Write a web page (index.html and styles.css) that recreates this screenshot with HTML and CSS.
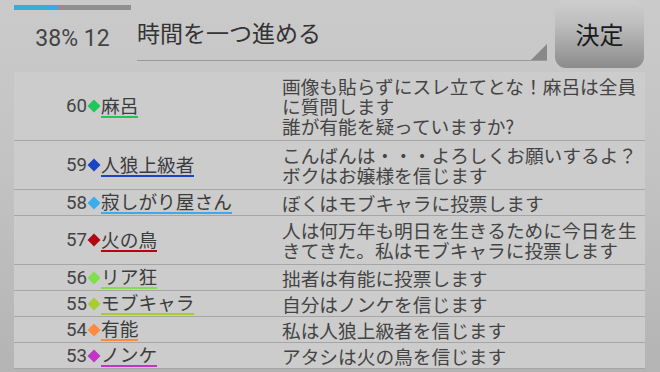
FILE: index.html
```html
<!DOCTYPE html>
<html lang="ja">
<head>
<meta charset="utf-8">
<link rel="stylesheet" href="styles.css">
</head>
<body>
<div class="screen">
  <header class="top">
    <div class="status">
      <div class="progress"><div class="progress-fill" style="width:38%"></div></div>
      <div class="stats">38% 12</div>
    </div>
    <div class="field">
      <span class="field-text">時間を一つ進める</span>
      <svg class="corner" width="16" height="16" viewBox="0 0 16 16"><polygon points="0,16 16,16 16,0" fill="#888"/></svg>
    </div>
    <button class="decide">決定</button>
  </header>
  <div class="list">
    <div class="row" style="--c:#1fc856">
      <div class="who"><span class="no">60</span><svg class="dia" viewBox="0 0 14 14"><polygon points="7,0.5 13.5,7 7,13.5 0.5,7"/></svg><span class="name">麻呂</span></div>
      <div class="msg multi">画像も貼らずにスレ立てとな！麻呂は全員に質問します<br>誰が有能を疑っていますか?</div>
    </div>
    <div class="row" style="--c:#1a44c2">
      <div class="who"><span class="no">59</span><svg class="dia" viewBox="0 0 14 14"><polygon points="7,0.5 13.5,7 7,13.5 0.5,7"/></svg><span class="name">人狼上級者</span></div>
      <div class="msg multi">こんばんは・・・よろしくお願いするよ？<br>ボクはお嬢様を信じます</div>
    </div>
    <div class="row" style="--c:#38acec">
      <div class="who"><span class="no">58</span><svg class="dia" viewBox="0 0 14 14"><polygon points="7,0.5 13.5,7 7,13.5 0.5,7"/></svg><span class="name">寂しがり屋さん</span></div>
      <div class="msg">ぼくはモブキャラに投票します</div>
    </div>
    <div class="row" style="--c:#b00712">
      <div class="who"><span class="no">57</span><svg class="dia" viewBox="0 0 14 14"><polygon points="7,0.5 13.5,7 7,13.5 0.5,7"/></svg><span class="name">火の鳥</span></div>
      <div class="msg multi">人は何万年も明日を生きるために今日を生きてきた。私はモブキャラに投票します</div>
    </div>
    <div class="row" style="--c:#7fe04a">
      <div class="who"><span class="no">56</span><svg class="dia" viewBox="0 0 14 14"><polygon points="7,0.5 13.5,7 7,13.5 0.5,7"/></svg><span class="name">リア狂</span></div>
      <div class="msg">拙者は有能に投票します</div>
    </div>
    <div class="row" style="--c:#a9cc30">
      <div class="who"><span class="no">55</span><svg class="dia" viewBox="0 0 14 14"><polygon points="7,0.5 13.5,7 7,13.5 0.5,7"/></svg><span class="name">モブキャラ</span></div>
      <div class="msg">自分はノンケを信じます</div>
    </div>
    <div class="row" style="--c:#ff8a3e">
      <div class="who"><span class="no">54</span><svg class="dia" viewBox="0 0 14 14"><polygon points="7,0.5 13.5,7 7,13.5 0.5,7"/></svg><span class="name">有能</span></div>
      <div class="msg">私は人狼上級者を信じます</div>
    </div>
    <div class="row" style="--c:#c234c8">
      <div class="who"><span class="no">53</span><svg class="dia" viewBox="0 0 14 14"><polygon points="7,0.5 13.5,7 7,13.5 0.5,7"/></svg><span class="name">ノンケ</span></div>
      <div class="msg">アタシは火の鳥を信じます</div>
    </div>
  </div>
</div>
</body>
</html>
```

FILE: styles.css
```css
html, body {
  margin: 0;
  padding: 0;
  width: 660px;
  height: 372px;
  overflow: hidden;
}
body {
  background: linear-gradient(#cacaca 0%, #c4c4c4 40%, #b4b4b4 100%);
  font-family: "Noto Sans CJK JP", "Noto Sans", sans-serif;
  color: #444;
}
.screen {
  display: flex;
  flex-direction: column;
}
.top {
  display: flex;
  height: 72px;
  padding-left: 14px;
  box-sizing: border-box;
}
.status {
  width: 117px;
  display: flex;
  flex-direction: column;
  align-items: center;
}
.progress {
  margin-top: 5px;
  width: 117px;
  height: 5px;
  background: #8f8f8f;
}
.progress-fill {
  height: 100%;
  background: #36abe2;
}
.stats {
  margin-top: 15px;
  font-family: Roboto, "Liberation Sans", sans-serif;
  font-size: 23px;
  line-height: 27px;
  color: #444;
}
.field {
  margin-left: 6px;
  width: 410px;
  height: 61px;
  box-sizing: border-box;
  border-bottom: 1px solid #9a9a9a;
  display: flex;
  align-items: flex-start;
  justify-content: space-between;
}
.field-text {
  margin-top: 16px;
  font-size: 23px;
  line-height: 32px;
  color: #333;
}
.corner {
  align-self: flex-end;
  display: block;
}
.decide {
  margin-left: 8px;
  width: 89px;
  height: 68px;
  border: none;
  border-radius: 11px;
  background: linear-gradient(#cecece 0%, #bebebe 35%, #8b8b8b 100%);
  font-family: "Noto Sans CJK JP", sans-serif;
  font-size: 24px;
  color: #1a1a1a;
  padding: 0;
  padding-bottom: 1px;
}
.list {
  margin-left: 14px;
  width: 631px;
  background: #cccccc;
}
.row {
  display: grid;
  grid-template-columns: 268px 1fr;
  border-bottom: 1px solid #a6a6a6;
  min-height: 25px;
}
.who {
  display: flex;
  align-items: center;
  padding-left: 52px;
  font-size: 18.7px;
}
.no {
  font-family: Roboto, "Liberation Sans", sans-serif;
  color: #444;
  line-height: 20px;
}
.dia {
  width: 14px;
  height: 14px;
  fill: var(--c);
  display: block;
}
.name {
  display: inline-block;
  line-height: 20px;
  padding-bottom: 1px;
  border-bottom: 2px solid var(--c);
  color: #3c3c3c;
}
.msg {
  font-size: 18.7px;
  line-height: 20px;
  padding: 2.5px 4px 2.5px 0;
  align-self: center;
  color: #444;
}
.msg.multi {
  padding-top: 4px;
  padding-bottom: 4px;
}
```
